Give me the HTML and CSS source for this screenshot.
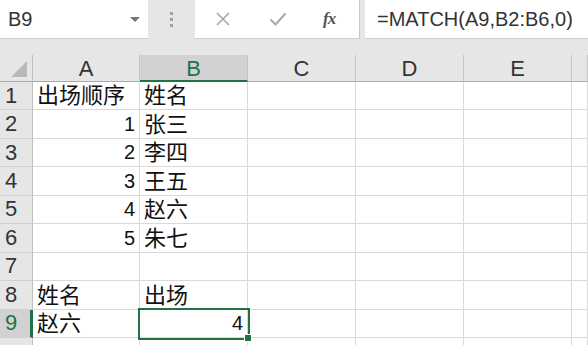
FILE: index.html
```html
<!DOCTYPE html>
<html lang="zh-CN">
<head>
  <meta charset="UTF-8">
  <title>MATCH</title>
  <link rel="stylesheet" href="styles.css">
</head>
<body>
  <div class="app">
    <div class="formula-bar">
      <div class="name-box">
        <span>B9</span>
        <span class="caret"></span>
      </div>
      <div class="grip"><i></i><i></i><i></i></div>
      <div class="fx-buttons">
        <svg width="16" height="16" viewBox="0 0 16 16"><path d="M2 2 L14 14 M14 2 L2 14" stroke="#a8a8a8" stroke-width="1.6" fill="none"/></svg>
        <svg width="18" height="16" viewBox="0 0 18 16"><path d="M1.5 8.5 L6.5 13.5 L16.5 2.5" stroke="#a8a8a8" stroke-width="2" fill="none"/></svg>
        <span class="fx">fx</span>
      </div>
      <div class="formula">=MATCH(A9,B2:B6,0)</div>
    </div>

    <div class="sheet">
      <!-- 列标题 -->
      <div class="corner">
        <svg width="16" height="16" viewBox="0 0 16 16"><path d="M16 0 L16 16 L0 16 Z" fill="#b9b9b9"/></svg>
      </div>
      <div class="ch">A</div>
      <div class="ch active">B</div>
      <div class="ch">C</div>
      <div class="ch">D</div>
      <div class="ch">E</div>
      <div class="ch"></div>

      <div class="rh">1</div>
      <div class="cell">出场顺序</div>
      <div class="cell">姓名</div>
      <div class="cell"></div><div class="cell"></div><div class="cell"></div><div class="cell"></div>

      <div class="rh">2</div>
      <div class="cell num">1</div>
      <div class="cell">张三</div>
      <div class="cell"></div><div class="cell"></div><div class="cell"></div><div class="cell"></div>

      <div class="rh">3</div>
      <div class="cell num">2</div>
      <div class="cell">李四</div>
      <div class="cell"></div><div class="cell"></div><div class="cell"></div><div class="cell"></div>

      <div class="rh">4</div>
      <div class="cell num">3</div>
      <div class="cell">王五</div>
      <div class="cell"></div><div class="cell"></div><div class="cell"></div><div class="cell"></div>

      <div class="rh">5</div>
      <div class="cell num">4</div>
      <div class="cell">赵六</div>
      <div class="cell"></div><div class="cell"></div><div class="cell"></div><div class="cell"></div>

      <div class="rh">6</div>
      <div class="cell num">5</div>
      <div class="cell">朱七</div>
      <div class="cell"></div><div class="cell"></div><div class="cell"></div><div class="cell"></div>

      <div class="rh">7</div>
      <div class="cell"></div>
      <div class="cell"></div>
      <div class="cell"></div><div class="cell"></div><div class="cell"></div><div class="cell"></div>

      <div class="rh">8</div>
      <div class="cell">姓名</div>
      <div class="cell">出场</div>
      <div class="cell"></div><div class="cell"></div><div class="cell"></div><div class="cell"></div>

      <div class="rh active">9</div>
      <div class="cell">赵六</div>
      <div class="cell num selected">4</div>
      <div class="cell"></div><div class="cell"></div><div class="cell"></div><div class="cell"></div>

      <!-- 第10行只露出一点 -->
      <div class="rh"></div>
      <div class="cell"></div>
      <div class="cell"></div>
      <div class="cell"></div><div class="cell"></div><div class="cell"></div><div class="cell"></div>
    </div>
  </div>
</body>
</html>
```

FILE: styles.css
```css
body {
  margin: 0;
  padding: 0;
  font-family: "Liberation Sans", "Noto Sans CJK SC", sans-serif;
  color: #222;
  background-color: #fff;
  overflow: hidden;
}

.app {
  width: 588px;
  height: 345px;
  overflow: hidden;
  background-color: #e6e6e6;
}

/* 编辑栏 */
.formula-bar {
  display: flex;
  height: 39px;
  margin-bottom: 16px;
}

.name-box {
  width: 148px;
  box-sizing: border-box;
  background-color: #fff;
  border-bottom: 1px solid #cfcfcf;
  display: flex;
  align-items: center;
  justify-content: space-between;
  padding: 0 8px 0 8px;
  font-size: 20px;
  color: #333;
}

.caret {
  width: 0;
  height: 0;
  border-left: 5px solid transparent;
  border-right: 5px solid transparent;
  border-top: 5px solid #777;
}

.grip {
  width: 47px;
  display: flex;
  flex-direction: column;
  align-items: center;
  justify-content: center;
  gap: 3px;
}

.grip i {
  width: 3px;
  height: 3px;
  background-color: #a0a0a0;
}

.fx-buttons {
  width: 165px;
  box-sizing: border-box;
  background-color: #fff;
  border-right: 1px solid #c6c6c6;
  border-bottom: 1px solid #cfcfcf;
  display: flex;
  align-items: center;
  padding-left: 20px;
}

.fx-buttons svg:first-child {
  margin-right: 38px;
}

.fx-buttons svg:nth-child(2) {
  margin-right: 36px;
}

.fx {
  font-family: "Liberation Serif", serif;
  font-style: italic;
  font-weight: bold;
  font-size: 17px;
  color: #555;
  letter-spacing: -1px;
}

.formula {
  flex: 1;
  margin-left: 5px;
  background-color: #fff;
  border-bottom: 1px solid #cfcfcf;
  display: flex;
  align-items: center;
  padding-left: 12px;
  font-size: 20px;
  color: #333;
  white-space: nowrap;
}

/* 表格 */
.sheet {
  display: grid;
  grid-template-columns: 33px 107px 108px 108px 108px 108px 16px;
  grid-template-rows: 27px repeat(9, 28.45px) 28px;
  height: 290px;
  background-color: #fff;
}

.corner {
  background-color: #e6e6e6;
  border-right: 1px solid #bfbfbf;
  border-bottom: 1px solid #ababab;
  display: flex;
  align-items: flex-end;
  justify-content: flex-end;
  padding: 0 5px 4px 0;
}

.ch {
  box-sizing: border-box;
  background-color: #e6e6e6;
  border-right: 1px solid #c4c4c4;
  border-bottom: 1px solid #ababab;
  display: flex;
  align-items: center;
  justify-content: center;
  font-size: 22px;
  color: #333;
  padding-top: 2px;
}

.ch.active {
  background-color: #d2d2d2;
  border-bottom: 2px solid #217346;
  color: #217346;
}

.rh {
  box-sizing: border-box;
  background-color: #e6e6e6;
  border-right: 1px solid #bfbfbf;
  border-bottom: 1px solid #d0d0d0;
  display: flex;
  align-items: center;
  padding-left: 5px;
  font-size: 22px;
  color: #333;
}

.rh.active {
  background-color: #d2d2d2;
  border-right: 3px solid #217346;
  color: #217346;
}

.cell {
  box-sizing: border-box;
  border-right: 1px solid #d9d9d9;
  border-bottom: 1px solid #d9d9d9;
  display: flex;
  align-items: flex-end;
  padding: 0 4px 0 4px;
  font-size: 22px;
  line-height: 27px;
  color: #111;
  white-space: nowrap;
}

.cell.num {
  justify-content: flex-end;
  font-size: 20px;
}

.cell.selected {
  position: relative;
  z-index: 1;
  outline: 2px solid #217346;
  outline-offset: 0;
}

/* 填充柄 */
.cell.selected::after {
  content: '';
  position: absolute;
  right: -5px;
  bottom: -5px;
  width: 6px;
  height: 6px;
  background-color: #217346;
  border: 1px solid #fff;
}
```
